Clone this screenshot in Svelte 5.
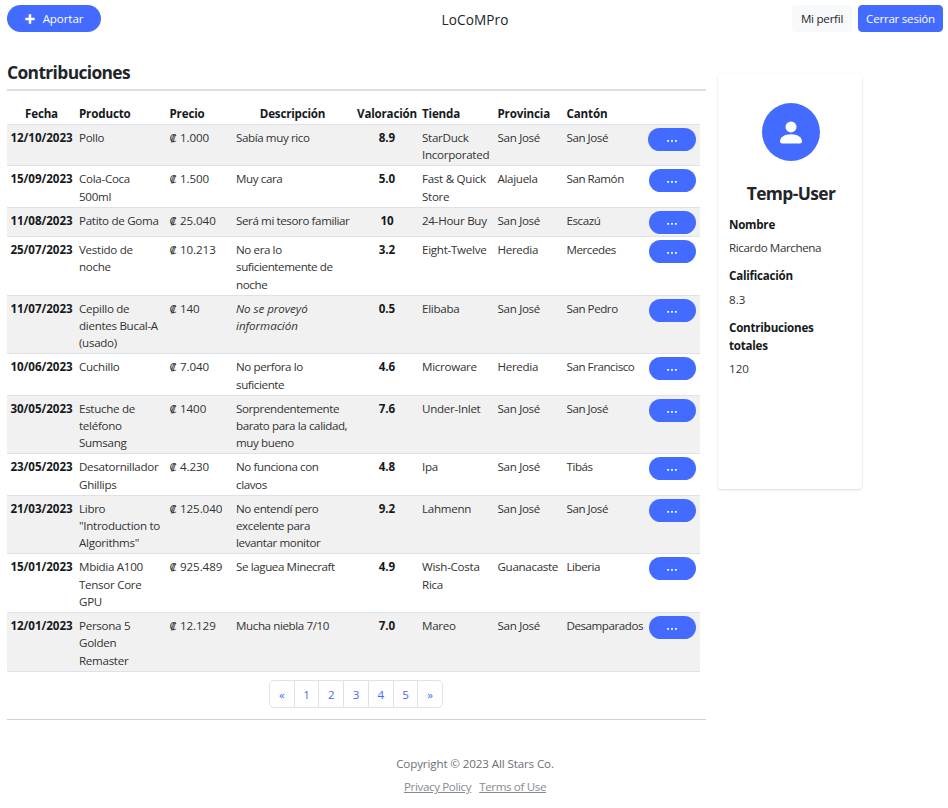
<script>
  const rows = [
    ['12/10/2023', 'Pollo', '1.000', 'Sabía muy rico', '8.9', 'StarDuck\nIncorporated', 'San José', 'San José', 2],
    ['15/09/2023', 'Cola-Coca\n500ml', '1.500', 'Muy cara', '5.0', 'Fast & Quick\nStore', 'Alajuela', 'San Ramón', 2],
    ['11/08/2023', 'Patito de Goma', '25.040', 'Será mi tesoro familiar', '10', '24-Hour Buy', 'San José', 'Escazú', 1],
    ['25/07/2023', 'Vestido de\nnoche', '10.213', 'No era lo\nsuficientemente de\nnoche', '3.2', 'Eight-Twelve', 'Heredia', 'Mercedes', 3],
    ['11/07/2023', 'Cepillo de\ndientes Bucal-A\n(usado)', '140', '', '0.5', 'Elibaba', 'San José', 'San Pedro', 3],
    ['10/06/2023', 'Cuchillo', '7.040', 'No perfora lo\nsuficiente', '4.6', 'Microware', 'Heredia', 'San Francisco', 2],
    ['30/05/2023', 'Estuche de\nteléfono\nSumsang', '1400', 'Sorprendentemente\nbarato para la calidad,\nmuy bueno', '7.6', 'Under-Inlet', 'San José', 'San José', 3],
    ['23/05/2023', 'Desatornillador\nGhillips', '4.230', 'No funciona con\nclavos', '4.8', 'Ipa', 'San José', 'Tibás', 2],
    ['21/03/2023', 'Libro\n"Introduction to\nAlgorithms"', '125.040', 'No entendí pero\nexcelente para\nlevantar monitor', '9.2', 'Lahmenn', 'San José', 'San José', 3],
    ['15/01/2023', 'Mbidia A100\nTensor Core\nGPU', '925.489', 'Se laguea Minecraft', '4.9', 'Wish-Costa\nRica', 'Guanacaste', 'Liberia', 3],
    ['12/01/2023', 'Persona 5\nGolden\nRemaster', '12.129', 'Mucha niebla 7/10', '7.0', 'Mareo', 'San José', 'Desamparados', 3]
  ];
  const pages = ['«', '1', '2', '3', '4', '5', '»'];
</script>

<div class="page">
  <header>
    <div class="side">
      <button class="btn pill">
        <svg width="10" height="10" viewBox="0 0 10 10"><path d="M5 .3v9.4M.3 5h9.4" stroke="#fff" stroke-width="2.5" /></svg>
        <span>Aportar</span>
      </button>
    </div>
    <span class="brand">LoCoMPro</span>
    <div class="side right">
      <button class="btn light">Mi perfil</button>
      <button class="btn">Cerrar sesión</button>
    </div>
  </header>

  <div class="content">
    <main>
      <h1>Contribuciones</h1>
      <div class="table" role="table">
        <div class="row head" role="row">
          <b class="c">Fecha</b><b>Producto</b><b>Precio</b><b class="c">Descripción</b><b class="c">Valoración</b><b class="store-head">Tienda</b><b>Provincia</b><b>Cantón</b><b></b>
        </div>
        {#each rows as [date, product, price, description, score, store, province, canton, lines], i}
          <div class="row lines{lines}" class:odd={i % 2 === 0} role="row">
            <b class="c">{date}</b>
            <span class="product">{product}</span>
            <span class="price"><span class="colon">₡</span>{price}</span>
            {#if description}<span class="desc">{description}</span>{:else}<em>{'No se proveyó\ninformación'}</em>{/if}
            <b class="c">{score}</b>
            <span class="store">{store}</span>
            <span class="place">{province}</span>
            <span class="canton">{canton}</span>
            <button class="more" class:first={i === 0} aria-label="Opciones">
              <svg width="10" height="2" viewBox="0 0 10 2" fill="#fff"><path d="M.2 .1h1.8v1.7H.2zM4.1 .1h1.8v1.7H4.1zM8 .1h1.8v1.7H8z" /></svg>
            </button>
          </div>
        {/each}
      </div>
      <nav>
        {#each pages as p}<a href="#top">{p}</a>{/each}
      </nav>
    </main>

    <aside>
      <div class="avatar">
        <svg width="22" height="23" viewBox="0 0 22 23" fill="#fff"><circle cx="11" cy="5.9" r="5.5" /><path d="M0 20.5C0 16 4.8 13.2 11 13.2S22 16 22 20.5Q22 22.6 19.8 22.6H2.2Q0 22.6 0 20.5Z" /></svg>
      </div>
      <h2>Temp-User</h2>
      <dl>
        <dt>Nombre</dt>
        <dd>Ricardo Marchena</dd>
        <dt>Calificación</dt>
        <dd class="num">8.3</dd>
        <dt>Contribuciones<br />totales</dt>
        <dd class="num">120</dd>
      </dl>
    </aside>
  </div>

  <footer>
    <p>Copyright © 2023 All Stars Co.</p>
    <p class="links"><a href="#privacy">Privacy Policy</a><a href="#terms">Terms of Use</a></p>
  </footer>
</div>

<style>
  :global(body) { margin: 0; background: #fff; }
  .page {
    width: 948px; height: 808px; overflow: hidden; box-sizing: border-box;
    font: 11.6px/17.28px "Open Sans", "Noto Sans", sans-serif;
    letter-spacing: -0.05px; color: #333;
  }
  header { display: flex; padding: 5px 5px 0 7px; height: 28px; align-items: flex-start; }
  .side { flex: 1; display: flex; }
  .right { justify-content: flex-end; gap: 6px; }
  .brand { font-size: 13.6px; line-height: 30px; color: #212529; letter-spacing: 0.1px; }
  .btn {
    font: inherit; letter-spacing: -0.25px; color: #fff; background: #446bff; border: 0; border-radius: 4.3px;
    height: 27px; padding: 1px 0 0; width: 85px; text-align: center; white-space: nowrap;
  }
  .btn.light { background: #f8f9fa; color: #212529; width: 60px; }
  .btn.pill { width: 94px; border-radius: 14px; display: flex; align-items: center; justify-content: center; gap: 8px; padding: 0; letter-spacing: -0.1px; }
  .pill span { padding-top: 1px; }
  .content { display: flex; align-items: flex-start; }
  main { width: 698.5px; margin-left: 7px; border-bottom: 1px solid #d0d2d4; height: 659px; margin-top: 27px; }
  h1 { margin: 0; font-size: 17.4px; line-height: 24px; height: 29px; border-bottom: 2px solid #dfe0e1; color: #212529; letter-spacing: -0.63px; }
  .table { width: 693px; margin-top: 12px; }
  .row {
    display: grid; grid-template-columns: 69px 90.5px 66.5px 119px 70px 72.5px 69px 81px 55px;
    box-sizing: border-box; border-bottom: 1px solid #dee2e6; padding-top: 4px; white-space: pre; align-items: start;
  }
  .row > b, .row > span, .row > em { padding-left: 3px; }
  .row > .c { text-align: center; padding: 0; }
  .row > .store, .row > .store-head { padding-left: 0; }
  .head { height: 22px; padding-top: 2px; }
  .head b { letter-spacing: -0.16px; }
  .head b.c { letter-spacing: -0.2px; }
  .product { letter-spacing: -0.3px; }
  .desc { letter-spacing: -0.4px; }
  em { letter-spacing: -0.05px; }
  .store { letter-spacing: -0.28px; }
  .place { letter-spacing: -0.32px; }
  .canton { letter-spacing: -0.45px; }
  .colon { display: inline-block; width: 10.4px; font-family: "DejaVu Sans", sans-serif; font-size: 11px; line-height: 12px; }
  b, dt { color: #16191c; font-weight: 700; }
  .odd { background: #f1f1f1; }
  .lines1 { height: 29.3px; }
  .lines2 { height: 41.35px; }
  .lines3 { height: 58.7px; }
  .more {
    display: flex; align-items: center; justify-content: center; width: 47px; height: 23px;
    padding: 3px 0 0; margin: -1px 0 0 4px; border: 0; border-radius: 12px; background: #446bff;
  }
  .more.first { width: 48.5px; margin-left: 3px; }
  nav { display: flex; width: 174px; box-sizing: border-box; margin: 8px 0 0 262px; border: 1px solid #dee2e6; border-radius: 5px; height: 28px; }
  nav a { flex: 1; text-align: center; line-height: 28px; color: #446bff; text-decoration: none; }
  nav a + a { border-left: 1px solid #dee2e6; }
  aside {
    width: 144px; height: 415px; margin: 41px 0 0 12.5px; padding: 29px 11px 0; box-sizing: border-box;
    border-radius: 4px; box-shadow: 0 1px 2.5px rgba(0, 0, 0, .15);
  }
  .avatar { width: 58px; height: 58px; border-radius: 50%; background: #446bff; margin: 0 auto 0 33px; display: flex; align-items: center; justify-content: center; }
  h2 { margin: 19.5px 0 0 2px; text-align: center; font-size: 17.4px; line-height: 24px; color: #212529; letter-spacing: -0.6px; }
  dl { margin: 11px 0 0; }
  dt { letter-spacing: -0.24px; }
  dd { margin: 5.8px 0 11.6px; letter-spacing: -0.38px; }
  dd.num { letter-spacing: 0; }
  footer { text-align: center; color: #6c6f73; padding: 35px 0 0 2px; }
  footer p { margin: 0 0 6px; letter-spacing: -0.12px; }
  .links { display: flex; justify-content: center; gap: 8px; }
  .links a { color: #868b90; letter-spacing: -0.37px; }
</style>
